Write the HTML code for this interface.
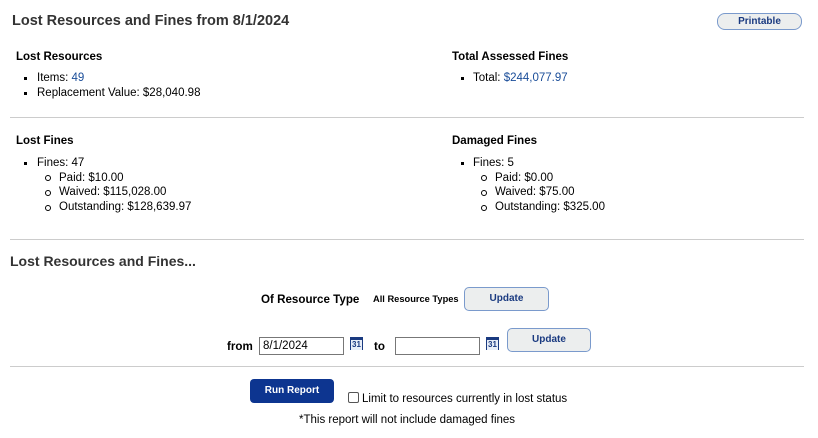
<!DOCTYPE html>
<html><head><style>
body{margin:0;width:818px;height:438px;background:#fff;font-family:"Liberation Sans",Arial,sans-serif;color:#000;position:relative;overflow:hidden}
.a{position:absolute;white-space:nowrap}
.h1{font-size:14.5px;font-weight:bold;color:#333}
.h2{font-size:11.5px;font-weight:bold;margin-top:2px}
.t{font-size:11.5px;margin-top:1px}
.b{color:#1a4d99}
hr{position:absolute;border:0;border-top:1px solid #ccc;margin:0;height:0}
.dot{position:absolute;width:3px;height:3px;background:#000}
.circ{position:absolute;width:4px;height:4px;border:1px solid #000;border-radius:50%}
.btn{position:absolute;background:#eceeee;border:1px solid #7a9acc;border-radius:5px;color:#1a3a80;font-size:10px;font-weight:bold;text-align:center;box-sizing:border-box}
.inp{position:absolute;border:1px solid #777;box-sizing:border-box;font-size:11.5px;padding:2px 3px;height:18px}
.cal{position:absolute;width:13px;height:13px;background:#1a3a80;color:#fff;font-size:8px;font-weight:bold;text-align:center;line-height:14px;border-top:3px solid #1a3a80;box-sizing:border-box}
.cal span{display:block;background:#e8eef8;color:#1a3a80;height:10px;line-height:10px;margin:0 1px}
</style></head><body>
<div class="a h1" style="left:12px;top:13px">Lost Resources and Fines from 8/1/2024</div>
<div class="btn" style="left:717px;top:13px;width:85px;height:17px;line-height:15px;border-radius:8px">Printable</div>

<div class="a h2" style="left:16px;top:49px">Lost Resources</div>
<div class="dot" style="left:24px;top:77px"></div><div class="a t" style="left:37px;top:71px">Items: <span class="b">49</span></div>
<div class="dot" style="left:24px;top:92px"></div><div class="a t" style="left:37px;top:86px">Replacement Value: $28,040.98</div>

<div class="a h2" style="left:452px;top:49px">Total Assessed Fines</div>
<div class="dot" style="left:461px;top:77px"></div><div class="a t" style="left:473px;top:71px">Total: <span class="b">$244,077.97</span></div>

<hr style="left:10px;top:117px;width:794px">

<div class="a h2" style="left:16px;top:133px">Lost Fines</div>
<div class="dot" style="left:24px;top:162px"></div><div class="a t" style="left:37px;top:156px">Fines: 47</div>
<div class="circ" style="left:45px;top:175px"></div><div class="a t" style="left:59px;top:171px">Paid: $10.00</div>
<div class="circ" style="left:45px;top:190px"></div><div class="a t" style="left:59px;top:185px">Waived: $115,028.00</div>
<div class="circ" style="left:45px;top:205px"></div><div class="a t" style="left:59px;top:200px">Outstanding: $128,639.97</div>

<div class="a h2" style="left:452px;top:133px">Damaged Fines</div>
<div class="dot" style="left:461px;top:162px"></div><div class="a t" style="left:473px;top:156px">Fines: 5</div>
<div class="circ" style="left:481px;top:175px"></div><div class="a t" style="left:495px;top:171px">Paid: $0.00</div>
<div class="circ" style="left:481px;top:190px"></div><div class="a t" style="left:495px;top:185px">Waived: $75.00</div>
<div class="circ" style="left:481px;top:205px"></div><div class="a t" style="left:495px;top:200px">Outstanding: $325.00</div>

<hr style="left:10px;top:239px;width:794px">

<div class="a h1" style="left:10px;top:253px;font-size:14px">Lost Resources and Fines...</div>

<div class="a h2" style="left:261px;top:291px;font-size:11.6px">Of Resource Type</div>
<div class="a" style="left:373px;top:294px;font-size:9.3px;font-weight:bold">All Resource Types</div>
<div class="btn" style="left:464px;top:287px;width:85px;height:24px;line-height:22px">Update</div>

<div class="a h2" style="left:227px;top:338px;font-size:11.6px">from</div>
<div class="inp" style="left:259px;top:337px;width:85px">8/1/2024</div>
<div class="cal" style="left:350px;top:337px"><span>31</span></div>
<div class="a h2" style="left:374px;top:338px;font-size:11.6px">to</div>
<div class="inp" style="left:395px;top:337px;width:85px"></div>
<div class="cal" style="left:486px;top:337px"><span>31</span></div>
<div class="btn" style="left:507px;top:328px;width:84px;height:24px;line-height:22px">Update</div>

<hr style="left:10px;top:366px;width:794px">

<div class="a" style="left:250px;top:379px;width:84px;height:24px;background:#0d3590;border-radius:4px;color:#fff;font-size:10px;font-weight:bold;text-align:center;line-height:24px">Run Report</div>
<div class="a" style="left:348px;top:392px;width:11px;height:11px;border:1px solid #555;border-radius:2px;box-sizing:border-box"></div>
<div class="a t" style="left:362px;top:392px">Limit to resources currently in lost status</div>
<div class="a t" style="left:299px;top:413px">*This report will not include damaged fines</div>
</body></html>
